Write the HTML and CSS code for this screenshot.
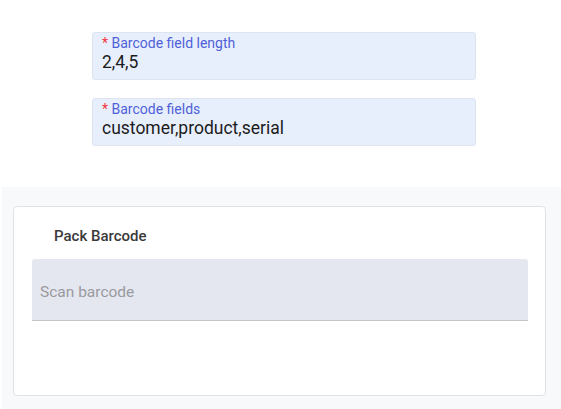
FILE: index.html
```html
<!DOCTYPE html>
<html lang="en">
<head>
    <meta charset="UTF-8">
    <meta name="viewport" content="width=device-width, initial-scale=1.0">
    <title>Pack Barcode</title>
    <link rel="stylesheet" href="styles.css">
</head>
<body>

<div class="settings">
    <div class="field">
        <label class="field-label"><span class="required">*</span> Barcode field length</label>
        <div class="field-value">2,4,5</div>
    </div>
    <div class="field">
        <label class="field-label"><span class="required">*</span> Barcode fields</label>
        <div class="field-value">customer,product,serial</div>
    </div>
</div>

<div class="scan-area">
    <div class="card">
        <div class="card-title">Pack Barcode</div>
        <input type="text" class="scan-input" placeholder="Scan barcode">
    </div>
</div>

</body>
</html>
```

FILE: styles.css
```css
body {
    font-family: Roboto, 'Noto Sans', sans-serif;
    margin: 0;
    background-color: #ffffff;
    color: #222;
    overflow: hidden;
}

.settings {
    display: flex;
    flex-direction: column;
    gap: 18px;
    padding: 32px 0 0 92px;
    width: 384px;
    height: 155px;
}

.field {
    height: 48px;
    box-sizing: border-box;
    background-color: #e8effc;
    border: 1px solid #dde4f0;
    border-radius: 3px;
    padding: 2px 9px 0 9px;
}

.field-label {
    display: block;
    font-size: 14px;
    line-height: 16px;
    color: #4f5fd8;
}

.required {
    color: #f5363e;
}

.field-value {
    font-size: 17.5px;
    line-height: 22px;
    color: #1c1c1c;
}

.scan-area {
    margin-left: 2px;
    background-color: #f8f9fb;
    padding: 19px 15px 13px 11px;
}

.card {
    height: 190px;
    box-sizing: border-box;
    background-color: #ffffff;
    border: 1px solid #e2e2e4;
    border-radius: 4px;
    padding: 20px 17px 0 18px;
}

.card-title {
    font-size: 15px;
    font-weight: 500;
    color: #3a3a3a;
    padding-left: 22px;
    line-height: 19px;
    margin-bottom: 13px;
}

.scan-input {
    display: block;
    width: 100%;
    height: 62px;
    box-sizing: border-box;
    background-color: #e4e7f0;
    border: none;
    border-bottom: 1px solid #c4c4c8;
    border-radius: 3px 3px 0 0;
    padding: 4px 8px 0 8px;
    font-family: Roboto, sans-serif;
    font-size: 15.5px;
    color: #333;
}

.scan-input::placeholder {
    color: #9a9a9e;
}
```
